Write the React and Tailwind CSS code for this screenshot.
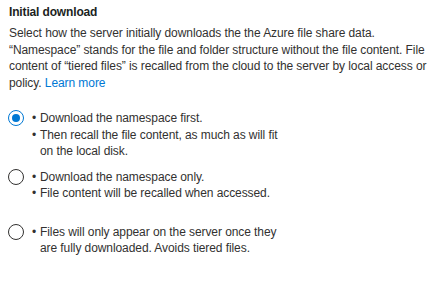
function Radio({ checked }) {
  return checked ? (
    <span className="mt-[0.25px] flex h-4 w-4 shrink-0 items-center justify-center rounded-full border border-[#0078d4] bg-white">
      <span className="h-2 w-2 rounded-full bg-[#0078d4]" />
    </span>
  ) : (
    <span className="mt-[0.25px] h-4 w-4 shrink-0 rounded-full border border-[#323130] bg-white" />
  );
}

function Bullet({ children }) {
  return (
    <div className="flex">
      <span className="w-[8px] shrink-0">•</span>
      <span>{children}</span>
    </div>
  );
}

function Option({ checked, children, className }) {
  return (
    <div className={"flex items-start gap-[8px] " + (className || "")}>
      <Radio checked={checked} />
      <div className="leading-[16.5px]">{children}</div>
    </div>
  );
}

export default function App() {
  return (
    <div
      className="h-[286px] w-[433px] bg-white pl-[8px] pt-[4px] text-[12px] tracking-[-0.08px] text-[#323130]"
      style={{ fontFamily: '"Segoe UI", "Liberation Sans", Arial, sans-serif' }}
    >
      <div className="pl-[1px] text-[12px] font-semibold leading-[16px] tracking-[-0.15px] text-[#201f1e]">Initial download</div>
      <p className="mt-[5px] whitespace-nowrap pl-[1px] leading-[16.5px]">
        Select how the server initially downloads the the Azure file share data.
        <br />
        “Namespace” stands for the file and folder structure without the file content. File
        <br />
        content of “tiered files” is recalled from the cloud to the server by local access or
        <br />
        policy. <a className="text-[#0078d4]">Learn more</a>
      </p>
      <div className="mt-[19px] whitespace-nowrap">
        <Option checked>
          <Bullet>Download the namespace first.</Bullet>
          <Bullet>
            Then recall the file content, as much as will fit
            <br />
            on the local disk.
          </Bullet>
        </Option>
        <Option className="mt-[9px]">
          <Bullet>Download the namespace only.</Bullet>
          <Bullet>File content will be recalled when accessed.</Bullet>
        </Option>
        <Option className="mt-[22px]">
          <Bullet>
            Files will only appear on the server once they
            <br />
            are fully downloaded. Avoids tiered files.
          </Bullet>
        </Option>
      </div>
    </div>
  );
}
